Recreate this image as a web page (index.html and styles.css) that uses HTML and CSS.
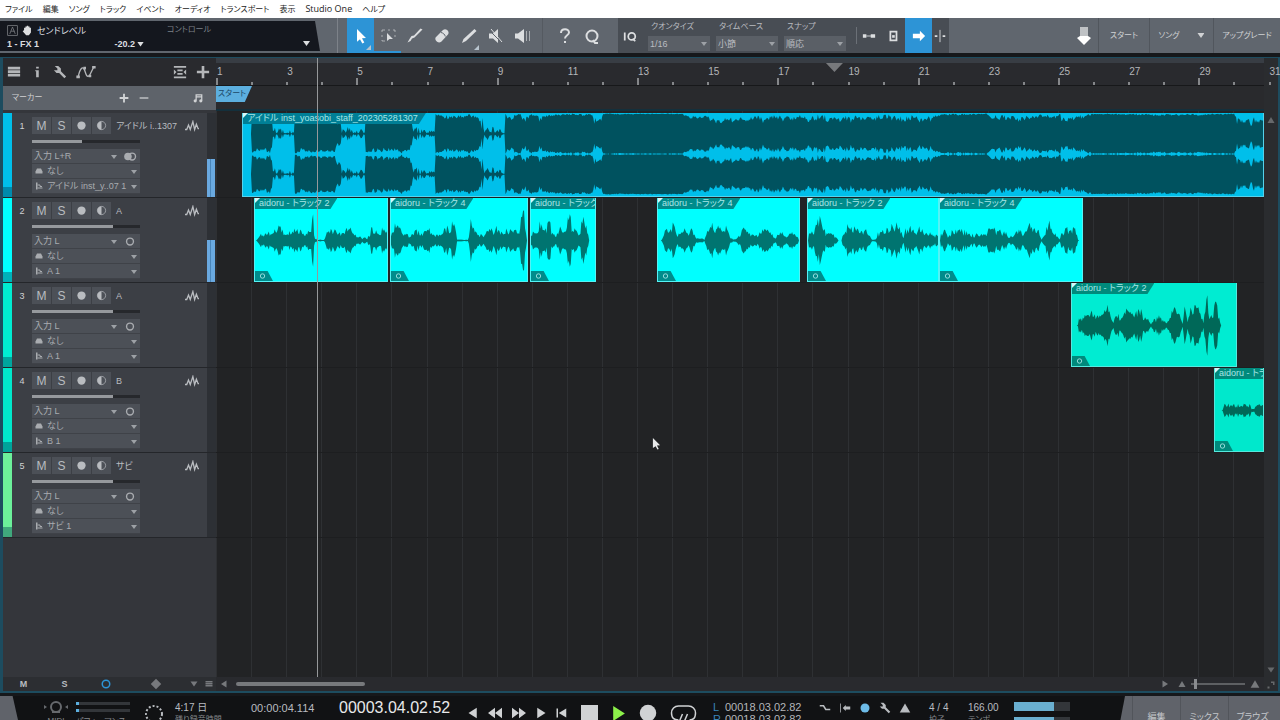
FILE: index.html
```html
<!DOCTYPE html>
<html lang="ja">
<head>
    <meta charset="UTF-8">
    <meta name="viewport" content="width=device-width, initial-scale=1.0">
    <title>Studio One</title>
    <link rel="stylesheet" href="styles.css">
</head>
<body>
    <svg class="symbols" aria-hidden="true">
        <symbol id="i-pointer" viewBox="0 0 16 16"><path d="M4 1l9 9-4 .3 2.3 4.2-2 1L7 11.200l-3 2.500z"/></symbol>
        <symbol id="i-range" viewBox="0 0 16 16"><path class="line faint" d="M2 5V3h3M8 3h2M13 3h2v2M2 8v2M2 13v1h3M15 8v2"/><path d="M7 6l6 6H9.500L7 14z"/></symbol>
        <symbol id="i-brush" viewBox="0 0 16 16"><path d="M15.500 1.500l-8 8-2.500 1-1.500 2.500-3 1.500 2-3.500 2-3 2.500-.5 6.500-7z"/></symbol>
        <symbol id="i-eraser" viewBox="0 0 16 16"><path d="M2 9l7-7c2-1.500 4-.5 5 1s.6 3-.5 4l-6 6.500c-2 1.500-4 1-5.200-.5S1 10 2 9z"/><path class="line cut" d="M7 4.500c2 .3 4 2 4.300 4"/></symbol>
        <symbol id="i-pen" viewBox="0 0 16 16"><path d="M13.500 1l2 2L5 13l-4 2 1.500-4z"/></symbol>
        <symbol id="i-mute" viewBox="0 0 16 16"><path d="M1 5.500h4L10 1v14l-5-4.500H1z"/><path class="line cut" d="M1 2l12 12"/><path class="line" d="M3 1l11 13"/></symbol>
        <symbol id="i-listen" viewBox="0 0 16 16"><path d="M0 5.500h3L9 1v14l-6-4.500H0z"/><path class="line faint" d="M11.500 3v10M14.500 3v10"/></symbol>
        <symbol id="i-help" viewBox="0 0 16 16"><path class="line thick" d="M4 5c0-5 8-5 8-.5 0 3-4 2.500-4 6M8 13v2"/></symbol>
        <symbol id="i-quant" viewBox="0 0 16 16"><circle class="line thick" cx="8" cy="8" r="5.500"/><path class="line thick" d="M9 12l2 3h3"/></symbol>
        <symbol id="i-iq" viewBox="0 0 16 16"><path class="line thick" d="M2 4v9M11 11l3 3"/><circle class="line thick" cx="10" cy="8.500" r="4"/></symbol>
        <symbol id="i-link" viewBox="0 0 16 16"><path d="M1 6h4v4H1zM10 6h5v4h-5z"/><path class="line" d="M5 8h6"/></symbol>
        <symbol id="i-box" viewBox="0 0 16 16"><rect class="line thick" x="5" y="3" width="7" height="10"/><path d="M7 7h3v3H7z"/></symbol>
        <symbol id="i-arrow" viewBox="0 0 16 16"><path d="M1 5.500h8V2l6 6-6 6v-3.500H1z"/></symbol>
        <symbol id="i-split" viewBox="0 0 16 16"><path class="line" d="M8 1v14"/><path d="M2 7h3v2H2zM11 7h3v2h-3z"/></symbol>
        <symbol id="i-down" viewBox="0 0 16 20"><path class="faint" d="M4 1h8v10H4z"/><path d="M1 12l3-2h8l3 2-7 7z"/></symbol>
        <symbol id="i-hand" viewBox="0 0 16 16"><path d="M3 8V4h2V2h2V1h2v1h2v2h2v7l-3 4H6L1 9l1-1z"/></symbol>
        <symbol id="i-auto" viewBox="0 0 16 16"><rect class="line" x="1" y="1" width="14" height="14"/><path class="line" d="M4 13l4-10 4 10M6 9h5"/></symbol>
        <symbol id="i-list" viewBox="0 0 16 16"><path d="M1 2h14v3H1zM1 6h14v3H1zM1 10h14v3H1z"/></symbol>
        <symbol id="i-info" viewBox="0 0 16 16"><path d="M7 2h3v2H7zM6 6h4v8H7V7H6z"/></symbol>
        <symbol id="i-wrench" viewBox="0 0 16 16"><path d="M2 1h4l3 3v3l6 6-2 2-6-6H4L1 6h4V4z"/></symbol>
        <symbol id="i-curve" viewBox="0 0 22 16"><path class="line bold" d="M2 14C4 4 7 1 9 5s2 10 6 7l5-10"/><path d="M0 12h4v3H0zM8 2h3v3H8zM14 11h3v3h-3zM18 1h4v3h-4z"/></symbol>
        <symbol id="i-lanes" viewBox="0 0 16 16"><path class="line thick" d="M1 2h14M1 14h14M5 6h6M5 10h6"/><path d="M1 5l3 3-3 3zM15 5l-3 3 3 3z"/></symbol>
        <symbol id="i-plus" viewBox="0 0 16 16"><path d="M6.500 1h3v5.500H15v3H9.500V15h-3V9.500H1v-3h5.500z"/></symbol>
        <symbol id="i-minus" viewBox="0 0 16 16"><path d="M1 7h14v2H1z"/></symbol>
        <symbol id="i-notes" viewBox="0 0 16 16"><path class="line thick" d="M5 12V3h9v9M5 6h9"/><circle cx="3.500" cy="12.500" r="2.500"/><circle cx="12.500" cy="12.500" r="2.500"/></symbol>
        <symbol id="i-wave" viewBox="0 0 16 12"><path class="line bold" d="M0 10h2l2-5 2 5 3-9 2 9 2-6 2 5h1"/></symbol>
        <symbol id="i-monitor" viewBox="0 0 16 16"><circle class="line" cx="8" cy="8" r="6"/><path d="M8 2v12a6 6 0 0 1 0-12z"/></symbol>
        <symbol id="i-rec" viewBox="0 0 16 16"><circle cx="8" cy="8" r="6"/></symbol>
        <symbol id="i-ring" viewBox="0 0 16 16"><circle class="line thick" cx="8" cy="8" r="5"/></symbol>
        <symbol id="i-stereo" viewBox="0 0 20 16"><circle cx="7" cy="8" r="5.500"/><circle class="line thick" cx="13" cy="8" r="5"/></symbol>
        <symbol id="i-bell" viewBox="0 0 16 16"><path d="M1 13V9l3-6h8l3 6v4z"/></symbol>
        <symbol id="i-out" viewBox="0 0 16 16"><path d="M2 1h3v14H2z"/><path class="line thick" d="M5 6h5v3h4M5 12h10"/></symbol>
        <symbol id="i-gem" viewBox="0 0 16 16"><path d="M8 1l7 7-7 7-7-7z"/></symbol>
        <symbol id="i-tri-down" viewBox="0 0 16 16"><path d="M1 3h14l-7 10z"/></symbol>
        <symbol id="i-tri-up" viewBox="0 0 16 16"><path d="M1 14L8 2l7 12z"/></symbol>
        <symbol id="i-left" viewBox="0 0 16 16"><path d="M13 1v14L2 8z"/></symbol>
        <symbol id="i-right" viewBox="0 0 16 16"><path d="M3 1v14l11-7z"/></symbol>
        <symbol id="i-rewind" viewBox="0 0 16 16"><path d="M8 2v12L0 8zM16 2v12L8 8z"/></symbol>
        <symbol id="i-forward" viewBox="0 0 16 16"><path d="M0 2v12l8-6zM8 2v12l8-6z"/></symbol>
        <symbol id="i-home" viewBox="0 0 16 16"><path d="M2 2h2v12H2zM15 2v12L5 8z"/></symbol>
        <symbol id="i-stop" viewBox="0 0 16 16"><path d="M0 0h16v16H0z"/></symbol>
        <symbol id="i-loop" viewBox="0 0 26 18"><path class="line bold" d="M8 16C3 16 1 13 1 9s3-7 7-7h10c4 0 7 3 7 7s-2 7-6 7M12 10l-3 7M17 10l-3 7"/></symbol>
        <symbol id="i-dial" viewBox="0 0 20 20"><circle class="line dots" cx="10" cy="10" r="8"/></symbol>
        <symbol id="i-midi" viewBox="0 0 24 16"><circle class="line thick" cx="12" cy="8" r="5"/><path d="M0 6l3 2-3 2zM24 6l-3 2 3 2zM8 12h8v2H8z"/></symbol>
        <symbol id="i-punch" viewBox="0 0 16 16"><path class="line thick" d="M1 5h5l3 5h6"/></symbol>
        <symbol id="i-preroll" viewBox="0 0 16 16"><path class="line" d="M2 2v12"/><path d="M5 8l4-4v2h6v4H9v2z"/></symbol>
        <symbol id="i-corner" viewBox="0 0 16 16"><path d="M8 1h7v7h-3V4H8zM1 11h4v4H1z"/></symbol>
        <symbol id="i-cursor" viewBox="0 0 10 14"><path d="M1 1l8 8-3.500.3 2 3.700-1.500.7-2-3.700L1 12z"/></symbol>
    </svg>

    <nav class="menubar">
        <a href="#">ファイル</a>
        <a href="#">編集</a>
        <a href="#">ソング</a>
        <a href="#">トラック</a>
        <a href="#">イベント</a>
        <a href="#">オーディオ</a>
        <a href="#">トランスポート</a>
        <a href="#">表示</a>
        <a href="#" class="latin">Studio One</a>
        <a href="#">ヘルプ</a>
    </nav>

    <header class="toolbar">
        <div class="param">
            <div class="param-send">
                <div class="param-title"><svg><use href="#i-auto"/></svg><svg class="lit"><use href="#i-hand"/></svg><span>センドレベル</span></div>
                <div class="param-value"><span>1 - FX 1</span><span>-20.2<i class="caret"></i></span></div>
            </div>
            <div class="param-control"><span>コントロール</span><i class="caret"></i></div>
        </div>
        <div class="tools">
            <button class="active corner" aria-label="矢印"><svg><use href="#i-pointer"/></svg></button>
            <button class="underlined" aria-label="範囲"><svg><use href="#i-range"/></svg></button>
            <button aria-label="分割"><svg><use href="#i-brush"/></svg></button>
            <button aria-label="消しゴム"><svg><use href="#i-eraser"/></svg></button>
            <button class="corner" aria-label="ペイント"><svg><use href="#i-pen"/></svg></button>
            <button aria-label="ミュート"><svg><use href="#i-mute"/></svg></button>
            <button aria-label="リッスン"><svg><use href="#i-listen"/></svg></button>
        </div>
        <div class="tools tools-help">
            <button aria-label="ヘルプ"><svg><use href="#i-help"/></svg></button>
            <button aria-label="クオンタイズ"><svg><use href="#i-quant"/></svg></button>
        </div>
        <div class="grid-panel">
            <button class="iq" aria-label="IQ"><svg><use href="#i-iq"/></svg></button>
            <label class="option"><span class="option-name">クオンタイズ</span><span class="pick"><select><option>1/16</option></select></span></label>
            <label class="option"><span class="option-name">タイムベース</span><span class="pick"><select><option>小節</option></select></span></label>
            <label class="option"><span class="option-name">スナップ</span><span class="pick"><select><option>順応</option></select></span></label>
            <div class="snap">
                <button aria-label="リンク"><svg><use href="#i-link"/></svg></button>
                <button aria-label="枠"><svg><use href="#i-box"/></svg></button>
                <button class="active" aria-label="追従"><svg><use href="#i-arrow"/></svg></button>
                <button aria-label="中央"><svg><use href="#i-split"/></svg></button>
            </div>
        </div>
        <div class="pages">
            <button class="drop" aria-label="ダウンロード"><svg><use href="#i-down"/></svg></button>
            <button class="page">スタート</button>
            <button class="page page-song">ソング<i class="caret"></i></button>
            <button class="page page-up">アップグレード</button>
        </div>
    </header>

    <main class="arranger">
        <section class="side">
            <div class="side-tools">
                <button aria-label="トラックリスト"><svg><use href="#i-list"/></svg></button>
                <button aria-label="インスペクター"><svg><use href="#i-info"/></svg></button>
                <button aria-label="設定"><svg><use href="#i-wrench"/></svg></button>
                <button class="wide" aria-label="オートメーション"><svg><use href="#i-curve"/></svg></button>
                <button class="push" aria-label="レーン"><svg><use href="#i-lanes"/></svg></button>
                <button aria-label="トラックを追加"><svg><use href="#i-plus"/></svg></button>
            </div>
            <div class="marker-head">
                <span>マーカー</span>
                <button aria-label="追加"><svg><use href="#i-plus"/></svg></button>
                <button aria-label="削除"><svg><use href="#i-minus"/></svg></button>
                <button class="push" aria-label="音符"><svg><use href="#i-notes"/></svg></button>
            </div>
            <div class="track-list" id="track-list"></div>
            <div class="side-foot">
                <button>M</button>
                <button>S</button>
                <button class="blue" aria-label="録音"><svg><use href="#i-ring"/></svg></button>
                <button class="gem" aria-label="モニター"><svg><use href="#i-gem"/></svg></button>
                <button class="small" aria-label="高さ"><svg><use href="#i-tri-down"/></svg></button>
                <button class="small" aria-label="一覧"><svg><use href="#i-list"/></svg></button>
            </div>
        </section>

        <section class="timeline">
            <div class="ruler" id="ruler"></div>
            <div class="marker-lane"><span class="marker">スタート</span></div>
            <div class="lanes" id="lanes"></div>
            <div class="time-foot">
                <svg><use href="#i-left"/></svg>
                <div class="scroll"><div class="scroll-thumb"></div></div>
                <svg><use href="#i-right"/></svg>
                <svg class="zoom-out"><use href="#i-tri-up"/></svg>
                <input class="zoom" type="range" min="0" max="100" value="6" aria-label="ズーム">
                <svg class="zoom-in"><use href="#i-tri-up"/></svg>
            </div>
            <div class="playhead"></div>
            <svg class="cursor"><use href="#i-cursor"/></svg>
        </section>
        <aside class="vscroll">
            <svg><use href="#i-tri-up"/></svg>
            <svg class="end"><use href="#i-tri-down"/></svg>
            <svg><use href="#i-corner"/></svg>
        </aside>
    </main>

    <footer class="transport">
        <div class="wedge"></div>
        <div class="cell midi"><svg><use href="#i-midi"/></svg><small>MIDI</small></div>
        <div class="cell perf"><div class="load"></div><div class="load"></div><small>パフォーマンス</small></div>
        <svg class="dial"><use href="#i-dial"/></svg>
        <div class="cell remain"><span>4:17 日</span><small>残り録音時間</small></div>
        <div class="cell seconds"><span>00:00:04.114</span></div>
        <div class="cell bars"><span>00003.04.02.52</span></div>
        <div class="buttons">
            <button aria-label="前へ"><svg><use href="#i-left"/></svg></button>
            <button class="mid" aria-label="巻き戻し"><svg><use href="#i-rewind"/></svg></button>
            <button class="mid" aria-label="早送り"><svg><use href="#i-forward"/></svg></button>
            <button aria-label="次へ"><svg><use href="#i-right"/></svg></button>
            <button aria-label="先頭へ"><svg><use href="#i-home"/></svg></button>
            <button class="big stop" aria-label="停止"><svg><use href="#i-stop"/></svg></button>
            <button class="big play" aria-label="再生"><svg><use href="#i-right"/></svg></button>
            <button class="big rec" aria-label="録音"><svg><use href="#i-rec"/></svg></button>
            <button class="loop" aria-label="ループ"><svg><use href="#i-loop"/></svg></button>
        </div>
        <div class="cell locators"><span><b>L</b>00018.03.02.82</span><span><b>R</b>00018.03.02.82</span></div>
        <div class="modes">
            <svg><use href="#i-punch"/></svg>
            <svg><use href="#i-preroll"/></svg>
            <svg class="blue"><use href="#i-rec"/></svg>
            <svg><use href="#i-wrench"/></svg>
            <svg><use href="#i-tri-up"/></svg>
        </div>
        <div class="cell meter"><span>4 / 4</span><small>拍子</small></div>
        <div class="cell tempo"><span>166.00</span><small>テンポ</small></div>
        <div class="cell master"><div class="level"></div><div class="level"></div></div>
        <div class="views">
            <button>編集</button>
            <button>ミックス</button>
            <button>ブラウズ</button>
        </div>
    </footer>

    <script src="app.js"></script>
</body>
</html>
```
FILE: styles.css
```css
* {
    box-sizing: border-box;
}
body {
    margin: 0;
    height: 100vh;
    display: flex;
    flex-direction: column;
    overflow: hidden;
    background: #16181b;
    color: #b9bcc0;
    font-family: "Liberation Sans", "Noto Sans CJK JP", sans-serif;
    font-feature-settings: "palt";
    font-size: 10px;
    line-height: 12px;
}
button, select, input {
    font: inherit;
    font-feature-settings: inherit;
    color: inherit;
    margin: 0;
    padding: 0;
    border: 0;
    background: none;
    border-radius: 0;
    appearance: none;
}
button {
    display: flex;
    align-items: center;
    justify-content: center;
}
svg {
    width: 12px;
    height: 12px;
    flex: none;
    fill: currentColor;
}
.symbols {
    position: absolute;
    width: 0;
    height: 0;
}
.line {
    fill: none;
    stroke: currentColor;
    stroke-width: 1;
}
.bold {
    stroke-width: 1.5;
}
.thick {
    stroke-width: 2;
}
.cut {
    stroke: #5e646c;
}
.dots {
    stroke-width: 2;
    stroke-dasharray: 2 2;
}
.faint {
    opacity: 0.6;
}
.caret {
    display: inline-block;
    width: 7px;
    height: 5px;
    background: currentColor;
    clip-path: polygon(0 0, 100% 0, 50% 100%);
}

/* menu */
.menubar {
    flex: none;
    display: flex;
    gap: 10px;
    height: 18px;
    padding: 0 5px;
    background: #fff;
    font-family: "Open Sans", "Noto Sans CJK JP", sans-serif;
    font-size: 8px;
    line-height: 18px;
}
.menubar a {
    color: #222;
    text-decoration: none;
    white-space: nowrap;
}
.menubar .latin {
    font-size: 9px;
}

/* toolbar */
.toolbar {
    flex: none;
    display: flex;
    height: 35px;
    background: #60666e;
    color: #dcdee0;
}
.param {
    flex: none;
    display: flex;
    width: 320px;
    height: 30px;
    margin-top: 3px;
    padding: 3px 10px 0 7px;
    background: #14171e;
    clip-path: polygon(0 0, 315px 0, 100% 100%, 0 100%);
}
.param-send {
    width: 137px;
}
.param-title, .param-value {
    display: flex;
    height: 13px;
    align-items: center;
}
.param-title {
    gap: 4px;
    font-size: 9px;
}
.param-title svg {
    width: 11px;
    height: 11px;
    opacity: 0.6;
}
.param-title .lit {
    opacity: 1;
}
.param-value {
    justify-content: space-between;
    font-size: 9px;
    font-weight: bold;
}
.param-value .caret {
    margin-left: 2px;
}
.param-control {
    flex: 1;
    display: flex;
    justify-content: space-between;
    padding-left: 23px;
    color: #7d8188;
    font-size: 8px;
}
.param-control .caret {
    margin-top: 17px;
    color: #dcdee0;
}
.tools {
    flex: none;
    display: flex;
    margin-left: 17px;
    padding-left: 9px;
    border-left: 1px solid #7d8289;
    background: #60666e;
}
.tools button {
    position: relative;
    width: 27px;
}
.tools svg {
    width: 16px;
    height: 16px;
}
.active {
    background: #2d94d6;
    color: #fff;
}
.underlined {
    border-bottom: 2px solid #2d94d6;
}
.corner::after {
    content: "";
    position: absolute;
    right: 3px;
    bottom: 3px;
    width: 5px;
    height: 5px;
    background: #b8c4ce;
    clip-path: polygon(100% 0, 100% 100%, 0 100%);
}
.tools-help {
    margin-left: 6px;
    padding: 0 13px 0 8px;
    border-left-color: #555a61;
}
.grid-panel {
    flex: none;
    display: flex;
    gap: 6px;
    width: 331px;
    background: #484d54;
}
.iq {
    width: 24px;
}
.iq svg {
    width: 14px;
    height: 14px;
}
.option {
    width: 62px;
    padding-top: 3px;
    font-size: 9px;
    color: #b9bcc0;
}
.option-name {
    display: block;
    padding-left: 3px;
    font-size: 8px;
}
.pick {
    position: relative;
    display: block;
    margin-top: 3px;
    background: #5a5f66;
}
.pick select {
    display: block;
    width: 100%;
    height: 15px;
    padding: 0 2px;
}
.pick::after {
    content: "";
    position: absolute;
    right: 3px;
    top: 6px;
    width: 6px;
    height: 4px;
    background: #9da1a6;
    clip-path: polygon(0 0, 100% 0, 50% 100%);
    pointer-events: none;
}
.snap {
    flex: 1;
    display: flex;
    margin-left: 4px;
}
.snap::before {
    content: "";
    width: 1px;
    height: 17px;
    margin-top: 9px;
    background: #6b7077;
}
.snap button {
    width: 24px;
}
.snap .active {
    width: 27px;
}
.snap button:last-child {
    width: 16px;
}
.snap svg {
    width: 14px;
    height: 14px;
}
.pages {
    flex: 1;
    display: flex;
    justify-content: flex-end;
    font-size: 8px;
    color: #d0d2d4;
}
.drop {
    width: 28px;
    color: #fff;
}
.drop svg {
    width: 16px;
    height: 20px;
}
.page {
    width: 51px;
    border-left: 1px solid #51565d;
}
.page-song {
    width: 64px;
    gap: 18px;
}
.page-up {
    width: 67px;
}

/* arranger */
.arranger {
    flex: 1;
    min-height: 0;
    display: flex;
    margin-top: 4px;
    border: solid #1d4c5f;
    border-width: 1px 2px 2px 3px;
    background: #232427;
}
.side {
    flex: none;
    display: flex;
    flex-direction: column;
    width: 213px;
    background: #34363b;
}
.side-tools {
    display: flex;
    align-items: center;
    gap: 9px;
    height: 28px;
    padding: 0 6px 0 4px;
    background: #292a2e;
    color: #b4b6b9;
}
.side-tools svg {
    width: 14px;
    height: 14px;
}
.side-tools .wide svg {
    width: 20px;
}
.push {
    margin-left: auto;
}
.marker-head {
    display: flex;
    align-items: center;
    gap: 10px;
    height: 24px;
    padding: 0 13px 0 9px;
    background: #5e636a;
    color: #d0d2d4;
}
.marker-head span {
    width: 97px;
    font-size: 8px;
}
.marker-head svg {
    width: 10px;
    height: 10px;
}
.track-list {
    flex: 1;
    margin-top: 3px;
}
.track {
    display: flex;
    height: 85px;
    border-bottom: 1px solid #24262a;
    background: #3c3f45;
}
.strip {
    width: 9px;
    display: flex;
    align-items: flex-end;
    background: var(--color);
}
.strip::after {
    content: "";
    width: 100%;
    height: 10px;
    background: rgba(0, 60, 80, 0.4);
}
.num {
    width: 20px;
    padding-top: 7px;
    text-align: center;
    font-size: 9px;
    color: #d0d2d4;
}
.strip-body {
    flex: 1;
    min-width: 0;
}
.head {
    display: flex;
    align-items: center;
    height: 20px;
    padding-top: 5px;
}
.head button {
    width: 20px;
    height: 17px;
    background: #4c5057;
    border-right: 1px solid #3c3f45;
    font-size: 12px;
}
.head button svg {
    width: 11px;
    height: 11px;
}
.name {
    flex: 1;
    margin-left: 4px;
    font-size: 9px;
    white-space: nowrap;
}
.head .wave {
    width: 14px;
    margin-right: 8px;
}
.fader {
    display: block;
    width: 108px;
    height: 3px;
    margin: 7px 0 6px;
    background: linear-gradient(to right, #96999d var(--level), #26282c var(--level));
}
.fader::-webkit-slider-thumb {
    appearance: none;
    width: 0;
}
.io {
    width: 108px;
    background: #4c5057;
    color: #a9acb0;
    font-size: 9px;
}
.io label {
    display: flex;
    align-items: center;
    height: 15px;
    border-bottom: 1px solid #3f4248;
}
.io .pick {
    flex: 1;
    margin: 0;
    background: none;
}
.io .pick select {
    height: 14px;
}
.io svg {
    width: 8px;
    height: 8px;
    margin: 0 2px 0 3px;
}
.io label:first-child svg {
    width: 16px;
    height: 11px;
    margin: 0 2px;
}
.vu {
    width: 9px;
    display: flex;
    align-items: flex-end;
    background: #2d3035;
}
.vu div {
    width: 8px;
    background: linear-gradient(to right, #6aa9e0 3px, #4a86ba 3px 4px, #6aa9e0 4px);
}
.side-foot {
    display: flex;
    height: 14px;
    background: #2c2e32;
    font-size: 9px;
    font-weight: bold;
}
.side-foot button {
    width: 41px;
}
.side-foot .blue {
    color: #2d94d6;
}
.side-foot .gem {
    width: 60px;
    color: #77797d;
}
.side-foot .small {
    width: 15px;
    color: #77797d;
}
.side-foot .small svg {
    width: 8px;
    height: 8px;
}
.timeline {
    flex: 1;
    min-width: 0;
    position: relative;
    display: flex;
    flex-direction: column;
}
.ruler {
    position: relative;
    height: 28px;
    background: #292a2e;
    border-top: 5px solid #383d44;
    border-bottom: 1px solid #17181a;
    font-size: 10px;
    color: #b4b6b9;
}
.bar {
    position: absolute;
    bottom: 0;
    height: 3px;
    border-left: 2px solid #85878a;
}
.bar.major {
    height: 7px;
}
.bar span {
    position: absolute;
    left: -1px;
    bottom: 1px;
    line-height: 25px;
}
.loop-end {
    position: absolute;
    left: 58.2%;
    top: 0;
    width: 17px;
    height: 9px;
    background: #77797c;
    clip-path: polygon(0 0, 100% 0, 50% 100%);
}
.marker-lane {
    height: 25px;
    background: #292a2d;
    border-bottom: 2px solid #14303c;
}
.marker {
    display: block;
    width: 36px;
    height: 16px;
    padding-left: 2px;
    background: #5cafdf;
    color: #1d4866;
    font-size: 8px;
    line-height: 16px;
    white-space: nowrap;
    clip-path: polygon(0 0, 100% 0, 80% 100%, 0 100%);
}
.lanes {
    flex: 1;
    position: relative;
    padding-top: 2px;
    background: #222325;
}
.gridline {
    position: absolute;
    top: 0;
    bottom: 0;
    border-left: 1px solid #2e3033;
}
.lane {
    position: relative;
    height: 85px;
    border-bottom: 1px solid #1d1e20;
}
.clip {
    position: absolute;
    top: 0;
    bottom: 0;
    overflow: hidden;
    background: var(--color);
    border: 1px solid rgba(170, 230, 235, 0.5);
    border-top-width: 0;
}
.clip .shape {
    position: absolute;
    inset: 0;
    width: 100%;
    height: 100%;
    fill: var(--wave);
}
.clip .title {
    position: absolute;
    left: 0;
    top: 0;
    height: 11px;
    padding: 0 8px 0 4px;
    background: var(--label);
    color: #a8e6e6;
    font-size: 9px;
    line-height: 11px;
    white-space: nowrap;
    clip-path: polygon(0 0, 100% 0, calc(100% - 7px) 100%, 0 100%);
}
.clip .title::before {
    content: "";
    position: absolute;
    left: 0;
    top: 0;
    width: 5px;
    height: 5px;
    background: #d8f8f8;
    clip-path: polygon(0 0, 100% 0, 0 100%);
}
.clip .badge {
    position: absolute;
    left: 0;
    bottom: 0;
    width: 18px;
    height: 10px;
    padding-left: 4px;
    background: var(--label);
    color: #a8e6e6;
    clip-path: polygon(0 0, 70% 0, 100% 100%, 0 100%);
}
.clip .badge svg {
    display: block;
    width: 7px;
    height: 10px;
}
.playhead {
    position: absolute;
    left: 9.6%;
    top: 0;
    bottom: 14px;
    width: 1px;
    background: #96989a;
}
.cursor {
    position: absolute;
    left: 41.6%;
    top: 59.8%;
    width: 9px;
    height: 13px;
    color: #e8e9ea;
}
.time-foot {
    display: flex;
    align-items: center;
    gap: 5px;
    height: 14px;
    padding: 0 4px;
    background: #292a2e;
    color: #77797c;
}
.time-foot svg {
    width: 8px;
    height: 8px;
}
.scroll {
    flex: 1;
    padding-left: 3px;
}
.scroll-thumb {
    width: 14%;
    height: 4px;
    border-radius: 2px;
    background: #77797c;
}
.zoom {
    width: 54px;
    height: 12px;
    background: linear-gradient(#5e6063, #5e6063) center / 100% 2px no-repeat;
}
.zoom::-webkit-slider-thumb {
    appearance: none;
    width: 3px;
    height: 10px;
    background: #8a8c8f;
}
.time-foot .zoom-out {
    margin-left: 4px;
}
.time-foot .zoom-in {
    width: 10px;
    height: 10px;
}
.vscroll {
    flex: none;
    display: flex;
    flex-direction: column;
    align-items: center;
    gap: 7px;
    width: 14px;
    padding: 58px 0 2px;
    background: #2a2c2f;
    color: #66686b;
}
.vscroll svg {
    width: 8px;
    height: 8px;
}
.vscroll .end {
    margin-top: auto;
}

/* transport, the lower row runs past the window edge */
.transport {
    flex: none;
    display: flex;
    height: 24px;
    margin-top: 3px;
    overflow: hidden;
    background: #111214;
    white-space: nowrap;
}
.wedge {
    width: 18px;
    background: #60636a;
    clip-path: polygon(0 0, 70% 0, 100% 100%, 0 100%);
}
.cell {
    display: flex;
    flex-direction: column;
    flex: none;
    padding-top: 6px;
}
.cell small {
    font-size: 8px;
    color: #85888c;
}
.midi {
    width: 58px;
    padding: 3px 0 0 18px;
    align-items: center;
    color: #66696d;
}
.midi svg {
    width: 24px;
    height: 16px;
}
.perf {
    width: 68px;
    gap: 4px;
}
.load {
    flex: none;
    width: 54px;
    height: 3px;
    background: linear-gradient(to right, #5cafdf 3px, #33363a 3px);
}
.dial {
    width: 20px;
    height: 20px;
    margin-top: 8px;
}
.remain {
    width: 87px;
    padding-left: 11px;
}
.seconds {
    width: 88px;
    font-size: 11px;
}
.bars {
    width: 124px;
    font-size: 16px;
    color: #e8e9ea;
}
.buttons {
    flex: none;
    display: flex;
    align-items: center;
    height: 34px;
    color: #d0d2d4;
}
.buttons button {
    width: 20px;
}
.buttons .mid {
    width: 24px;
}
.buttons .mid svg {
    width: 16px;
    height: 14px;
}
.buttons .big {
    width: 29px;
}
.buttons .stop {
    margin-left: 4px;
}
.buttons .big svg {
    width: 17px;
    height: 17px;
}
.buttons .rec svg {
    width: 22px;
    height: 22px;
}
.buttons .play {
    color: #8cf04a;
}
.buttons .loop {
    width: 42px;
}
.loop svg {
    width: 27px;
    height: 18px;
}
.locators {
    width: 108px;
    padding: 5px 0 0 9px;
    font-size: 11px;
    color: #b4b6b9;
}
.locators b {
    display: inline-block;
    width: 12px;
    font-weight: normal;
    color: #3a84b8;
}
.modes {
    flex: none;
    display: flex;
    gap: 8px;
    width: 117px;
    padding: 6px 0 0 7px;
}
.blue {
    color: #6dbbe8;
}
.meter {
    width: 39px;
}
.tempo {
    width: 46px;
}
.master {
    gap: 6px;
}
.level {
    flex: none;
    width: 56px;
    height: 9px;
    background: linear-gradient(to right, #6aafd0 40px, #33363a 40px);
}
.views {
    flex: none;
    display: flex;
    width: 163px;
    height: 42px;
    margin-left: auto;
    padding: 0 4px 0 15px;
    background: #60636a;
    color: #c4c7ca;
    clip-path: polygon(8px 0, 100% 0, 100% 100%, 0 100%);
}
.views button {
    flex: 1;
    border-left: 1px solid #52555b;
    font-size: 9px;
}
```
FILE: app.js
```js
// bars that fit in the lane area, and the width the clip positions are measured in
const VISIBLE_BARS = 29.87;
const LANE_PX = 1048;

const tracks = [
    { name: 'アイドル i..1307', input: '入力 L+R', out: 'アイドル inst_y..07 1', color: '#00bfea', wave: '#00525f', label: '#007f96', level: 46, vu: 45, stereo: true },
    { name: 'A', input: '入力 L', out: 'A 1', color: '#00ffff', wave: '#007470', label: '#008c8c', level: 75, vu: 50 },
    { name: 'A', input: '入力 L', out: 'A 1', color: '#00ecd2', wave: '#006858', label: '#008a7c', level: 75, vu: 0 },
    { name: 'B', input: '入力 L', out: 'B 1', color: '#00e8cc', wave: '#006858', label: '#008a7c', level: 75, vu: 0 },
    { name: 'サビ', input: '入力 L', out: 'サビ 1', color: '#6cf09a', wave: '#20704a', label: '#30905c', level: 75, vu: 0 }
];

// peaks are [position, height] pairs, joined by straight lines
const clips = [
    { track: 0, start: 26, length: 1022, title: 'アイドル inst_yoasobi_staff_202305281307', stereo: true,
      peaks: [[0,0],[8,0],[9,19],[14,16],[26,17],[30,8],[34,4],[51,3],[52,19],[60,16],[72,18],[84,16],[92,18],[98,6],[105,4],[122,3],[123,19],[134,16],[150,17],[165,17],[170,6],[178,4],[192,3],[193,19],[206,16],[222,17],[235,17],[242,5],[262,3],[263,19],[268,15],[276,18],[284,14],[290,18],[300,14],[304,18],[318,19],[350,19],[352,11],[359,11],[361,20],[440,20],[446,17],[470,15],[490,14],[500,16],[512,14],[550,16],[580,15],[620,15],[660,15],[690,15],[696,19],[745,20],[752,16],[780,15],[800,18],[830,15],[845,18],[855,20],[910,19],[940,19],[993,20],[996,11],[1006,14],[1010,11],[1022,15]] },
    { track: 1, start: 38, length: 134, title: 'aidoru - トラック 2',
      peaks: [[2,1],[5,8],[9,5],[15,10],[25,13],[30,8],[40,12],[50,7],[57,12],[59,30],[61,3],[64,1],[70,1],[74,14],[77,16],[84,6],[92,14],[98,10],[105,3],[110,4],[114,1],[118,16],[125,8],[130,15],[132,22],[134,10]] },
    { track: 1, start: 174, length: 138, title: 'aidoru - トラック 4',
      peaks: [[0,5],[4,14],[10,15],[15,9],[18,3],[25,11],[32,6],[36,13],[44,8],[50,8],[55,17],[60,11],[63,30],[66,8],[67,1],[78,1],[81,20],[86,10],[90,5],[96,8],[100,15],[104,6],[108,15],[114,7],[118,15],[124,11],[131,14],[134,34],[137,10]] },
    { track: 1, start: 314, length: 66, title: 'aidoru - トラック 4',
      peaks: [[0,8],[4,12],[11,18],[16,10],[19,30],[21,8],[26,8],[31,16],[36,10],[40,30],[44,13],[48,9],[55,26],[59,9],[60,0]] },
    { track: 1, start: 441, length: 143, title: 'aidoru - トラック 4',
      peaks: [[4,1],[8,13],[12,10],[16,20],[19,7],[25,17],[31,6],[34,13],[39,2],[43,4],[47,1],[50,11],[54,13],[56,24],[58,11],[61,16],[65,8],[69,13],[73,4],[76,1],[79,2],[87,13],[94,9],[100,7],[106,11],[111,14],[116,7],[119,2],[124,10],[130,5],[136,7],[142,3]] },
    { track: 1, start: 591, length: 132, title: 'aidoru - トラック 2',
      peaks: [[1,7],[6,8],[12,22],[15,16],[18,6],[24,10],[29,3],[31,0],[34,0],[36,8],[40,13],[47,17],[54,9],[60,14],[63,9],[65,1],[69,1],[72,10],[82,12],[90,17],[94,12],[97,3],[99,11],[110,13],[114,15],[118,7],[122,7],[126,11],[132,5]] },
    { track: 1, start: 723, length: 144, title: 'aidoru - トラック 4',
      peaks: [[1,7],[5,11],[9,6],[12,10],[25,11],[35,8],[40,5],[50,12],[62,12],[70,4],[80,9],[86,9],[93,18],[100,10],[103,1],[106,7],[111,20],[116,9],[121,2],[125,11],[129,15],[134,8],[137,18],[140,1]] },
    { track: 2, start: 855, length: 166, title: 'aidoru - トラック 2',
      peaks: [[6,1],[7,7],[15,9],[22,17],[28,11],[33,15],[37,18],[41,5],[45,9],[52,10],[57,18],[62,11],[70,17],[76,9],[80,1],[84,7],[88,14],[95,3],[98,13],[104,18],[110,9],[112,2],[114,20],[117,7],[120,20],[127,20],[133,3],[137,32],[139,6],[143,12],[146,28],[149,9],[151,0]] },
    { track: 3, start: 998, length: 50, title: 'aidoru - トラック 2',
      peaks: [[8,1],[10,6],[14,7],[17,5],[21,8],[26,4],[30,9],[36,8],[38,1],[41,2],[44,6],[50,7]] }
];

const use = (id, cls = '') => `<svg class="${cls}"><use href="#${id}"/></svg>`;
const pct = px => (px / LANE_PX * 100).toFixed(3) + '%';

function amplitude(peaks, x) {
    if (x < peaks[0][0]) return 0;
    for (let i = 1; i < peaks.length; i++) {
        if (x <= peaks[i][0]) {
            const [x0, y0] = peaks[i - 1];
            const [x1, y1] = peaks[i];
            return y0 + (y1 - y0) * (x - x0) / (x1 - x0 || 1);
        }
    }
    return 0;
}

// repeatable noise, so a clip looks the same on every redraw
function noise(n) {
    const v = Math.sin(n * n * 0.37 + n * 12.9898) * 43758.5453;
    return v - Math.floor(v);
}

function channelPath(clip, center, limit) {
    const top = [];
    const bottom = [];
    for (let x = 0; x <= clip.length; x++) {
        const a = amplitude(clip.peaks, x);
        // slow swell on top of the fine grain
        const n = noise(x + clip.start) * 0.6 + noise(Math.floor(x / 4) + clip.start) * 0.4;
        let h = a * (0.3 + n);
        if (clip.stereo) {
            h = a > 10 ? 21 - (21 - a) * (0.2 + 1.5 * n) : a * Math.pow(n, 2) * 3;
        }
        h = Math.min(Math.max(h, a > 0 ? 0.5 : 0.1), limit);
        top.push(`${x} ${(center - h).toFixed(1)}`);
        bottom.unshift(`${x} ${(center + h).toFixed(1)}`);
    }
    return 'M' + top.concat(bottom).join('L') + 'Z';
}

function renderTracks() {
    document.getElementById('track-list').innerHTML = tracks.map((t, i) => `
        <div class="track" style="--color: ${t.color}">
            <div class="strip"></div>
            <div class="num">${i + 1}</div>
            <div class="strip-body">
                <div class="head">
                    <button>M</button><button>S</button>
                    <button aria-label="録音">${use('i-rec')}</button>
                    <button aria-label="モニター">${use('i-monitor')}</button>
                    <span class="name">${t.name}</span>
                    ${use('i-wave', 'wave')}
                </div>
                <input class="fader" type="range" aria-label="音量" value="${t.level}" style="--level: ${t.level}%">
                <div class="io">
                    <label><span class="pick"><select aria-label="入力"><option>${t.input}</option></select></span>${use(t.stereo ? 'i-stereo' : 'i-ring')}</label>
                    <label>${use('i-bell')}<span class="pick"><select aria-label="グループ"><option>なし</option></select></span></label>
                    <label>${use('i-out')}<span class="pick"><select aria-label="レイヤー"><option>${t.out}</option></select></span></label>
                </div>
            </div>
            <div class="vu"><div style="height: ${t.vu}%"></div></div>
        </div>`).join('');
}

function renderRuler() {
    let html = '<div class="loop-end"></div>';
    for (let bar = 1; bar <= 31; bar++) {
        const left = ((bar - 1) / VISIBLE_BARS * 100).toFixed(3);
        const major = (bar - 1) % 4 === 0 ? ' major' : '';
        html += `<div class="bar${major}" style="left: ${left}%">${bar % 2 ? `<span>${bar}</span>` : ''}</div>`;
    }
    document.getElementById('ruler').innerHTML = html;
}

function renderLanes() {
    let html = '';
    for (let bar = 0; bar < VISIBLE_BARS; bar++) {
        html += `<div class="gridline" style="left: ${(bar / VISIBLE_BARS * 100).toFixed(3)}%"></div>`;
    }
    tracks.forEach((t, i) => {
        html += `<div class="lane" style="--color: ${t.color}; --wave: ${t.wave}; --label: ${t.label}">`;
        clips.filter(c => c.track === i).forEach(c => {
            const path = c.stereo ? channelPath(c, 21, 21) + channelPath(c, 62, 21) : channelPath(c, 43, 40);
            html += `<div class="clip" style="left: ${pct(c.start)}; width: ${pct(c.length)}">
                <svg class="shape" viewBox="0 0 ${c.length} 84" preserveAspectRatio="none"><path d="${path}"/></svg>
                <span class="title">${c.title}</span>
                ${c.stereo ? '' : `<span class="badge">${use('i-ring')}</span>`}
            </div>`;
        });
        html += '</div>';
    });
    document.getElementById('lanes').innerHTML = html;
}

renderTracks();
renderRuler();
renderLanes();
```
